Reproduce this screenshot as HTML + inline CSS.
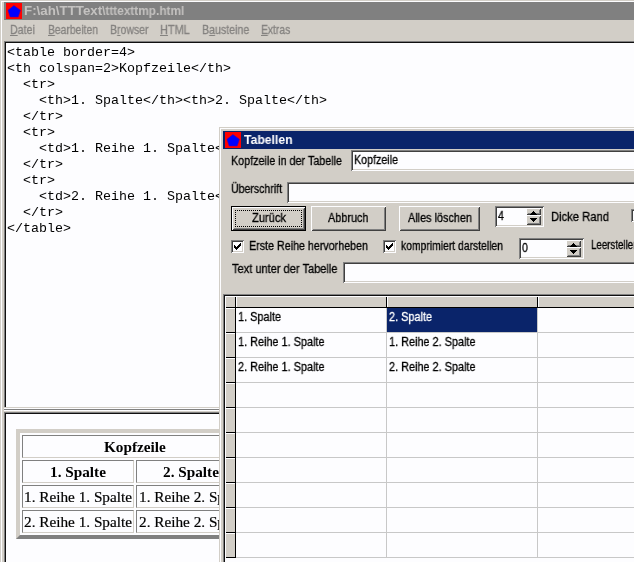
<!DOCTYPE html>
<html><head><meta charset="utf-8"><title>Tabellen</title>
<style>
html,body{margin:0;padding:0}
body{width:634px;height:562px;overflow:hidden;position:relative;background:#d2cec7;font-family:'Liberation Sans',sans-serif}
div,svg,.t{position:absolute}
.t{white-space:pre;transform-origin:0 0;will-change:transform}
u{text-decoration:underline;text-underline-offset:1px}
</style></head>
<body>
<div style="left:1px;top:1px;width:633px;height:1px;background:#fdfdff;"></div>
<div style="left:1px;top:1px;width:1px;height:561px;background:#fdfdff;"></div>
<div style="left:4px;top:2px;width:630px;height:18px;background:#808080;"></div>
<svg style="left:6px;top:3px" width="16" height="16" viewBox="0 0 16 16"><rect width="16" height="16" fill="#ff0000"/><polygon points="7.9,2.6 14.4,7.3 12.2,13.9 4.2,13.9 2,7.3" fill="#0000ff" stroke="#4000b0" stroke-width="0.6"/></svg>
<span class="t" style="left:24px;top:5.42px;font-size:12.5px;line-height:12.5px;color:#c4c2c0;font-weight:700;transform:scaleX(1.0655);">F:\ah\TTText</span>
<span class="t" style="left:102.2px;top:5.42px;font-size:12.5px;line-height:12.5px;color:#c4c2c0;font-weight:700;transform:scaleX(0.9480);">\tttexttmp.html</span>
<span class="t" style="left:10.2px;top:24.42px;font-size:12.5px;line-height:12.5px;color:#858380;-webkit-text-stroke:0.3px;transform:scaleX(0.8497);"><u>D</u>atei</span>
<span class="t" style="left:47.5px;top:24.42px;font-size:12.5px;line-height:12.5px;color:#858380;-webkit-text-stroke:0.3px;transform:scaleX(0.8269);"><u>B</u>earbeiten</span>
<span class="t" style="left:109.5px;top:24.42px;font-size:12.5px;line-height:12.5px;color:#858380;-webkit-text-stroke:0.3px;transform:scaleX(0.8398);">B<u>r</u>owser</span>
<span class="t" style="left:159.8px;top:24.42px;font-size:12.5px;line-height:12.5px;color:#858380;-webkit-text-stroke:0.3px;transform:scaleX(0.8727);"><u>H</u>TML</span>
<span class="t" style="left:201.8px;top:24.42px;font-size:12.5px;line-height:12.5px;color:#858380;-webkit-text-stroke:0.3px;transform:scaleX(0.8488);">B<u>a</u>usteine</span>
<span class="t" style="left:260.8px;top:24.42px;font-size:12.5px;line-height:12.5px;color:#858380;-webkit-text-stroke:0.3px;transform:scaleX(0.8240);"><u>E</u>xtras</span>
<div style="left:4px;top:41px;width:630px;height:366px;background:#808080;"></div>
<div style="left:5px;top:42px;width:629px;height:365px;background:#101010;"></div>
<div style="left:6px;top:43px;width:628px;height:364px;background:#fdfdff;"></div>
<span class="t" style="left:7px;top:45.89px;font-size:13.333px;line-height:13.333px;color:#000;font-family:'Liberation Mono',monospace;">&lt;table border=4&gt;</span>
<span class="t" style="left:7px;top:61.89px;font-size:13.333px;line-height:13.333px;color:#000;font-family:'Liberation Mono',monospace;">&lt;th colspan=2&gt;Kopfzeile&lt;/th&gt;</span>
<span class="t" style="left:7px;top:77.89px;font-size:13.333px;line-height:13.333px;color:#000;font-family:'Liberation Mono',monospace;">  &lt;tr&gt;</span>
<span class="t" style="left:7px;top:93.89px;font-size:13.333px;line-height:13.333px;color:#000;font-family:'Liberation Mono',monospace;">    &lt;th&gt;1. Spalte&lt;/th&gt;&lt;th&gt;2. Spalte&lt;/th&gt;</span>
<span class="t" style="left:7px;top:109.89px;font-size:13.333px;line-height:13.333px;color:#000;font-family:'Liberation Mono',monospace;">  &lt;/tr&gt;</span>
<span class="t" style="left:7px;top:125.89px;font-size:13.333px;line-height:13.333px;color:#000;font-family:'Liberation Mono',monospace;">  &lt;tr&gt;</span>
<span class="t" style="left:7px;top:141.89px;font-size:13.333px;line-height:13.333px;color:#000;font-family:'Liberation Mono',monospace;">    &lt;td&gt;1. Reihe 1. Spalte&lt;/td&gt;&lt;td&gt;1. Reihe 2. Spalte&lt;/td&gt;</span>
<span class="t" style="left:7px;top:157.89px;font-size:13.333px;line-height:13.333px;color:#000;font-family:'Liberation Mono',monospace;">  &lt;/tr&gt;</span>
<span class="t" style="left:7px;top:173.89px;font-size:13.333px;line-height:13.333px;color:#000;font-family:'Liberation Mono',monospace;">  &lt;tr&gt;</span>
<span class="t" style="left:7px;top:189.89px;font-size:13.333px;line-height:13.333px;color:#000;font-family:'Liberation Mono',monospace;">    &lt;td&gt;2. Reihe 1. Spalte&lt;/td&gt;&lt;td&gt;2. Reihe 2. Spalte&lt;/td&gt;</span>
<span class="t" style="left:7px;top:205.89px;font-size:13.333px;line-height:13.333px;color:#000;font-family:'Liberation Mono',monospace;">  &lt;/tr&gt;</span>
<span class="t" style="left:7px;top:221.89px;font-size:13.333px;line-height:13.333px;color:#000;font-family:'Liberation Mono',monospace;">&lt;/table&gt;</span>
<div style="left:4px;top:407px;width:630px;height:1px;background:#d2cec7;"></div>
<div style="left:4px;top:408px;width:630px;height:1px;background:#fdfdff;"></div>
<div style="left:4px;top:409px;width:630px;height:1px;background:#808080;"></div>
<div style="left:4px;top:410px;width:630px;height:1px;background:#fdfdff;"></div>
<div style="left:4px;top:411px;width:630px;height:1px;background:#d2cec7;"></div>
<div style="left:4px;top:412px;width:630px;height:150px;background:#808080;"></div>
<div style="left:5px;top:413px;width:629px;height:149px;background:#101010;"></div>
<div style="left:6px;top:414px;width:628px;height:148px;background:#fdfdff;"></div>
<div style="left:16px;top:429px;width:238px;height:110px;background:#fdfdff;box-sizing:border-box;border:4px solid;border-color:#d2cec7 #808080 #808080 #d2cec7"></div>
<div style="left:22px;top:435px;width:226px;height:23px;box-sizing:border-box;border:1px solid;border-color:#808080 #d2cec7 #d2cec7 #808080"></div>
<div style="left:22px;top:460px;width:112px;height:23px;box-sizing:border-box;border:1px solid;border-color:#808080 #d2cec7 #d2cec7 #808080"></div>
<div style="left:136px;top:460px;width:112px;height:23px;box-sizing:border-box;border:1px solid;border-color:#808080 #d2cec7 #d2cec7 #808080"></div>
<div style="left:22px;top:485px;width:112px;height:23px;box-sizing:border-box;border:1px solid;border-color:#808080 #d2cec7 #d2cec7 #808080"></div>
<div style="left:136px;top:485px;width:112px;height:23px;box-sizing:border-box;border:1px solid;border-color:#808080 #d2cec7 #d2cec7 #808080"></div>
<div style="left:22px;top:510px;width:112px;height:23px;box-sizing:border-box;border:1px solid;border-color:#808080 #d2cec7 #d2cec7 #808080"></div>
<div style="left:136px;top:510px;width:112px;height:23px;box-sizing:border-box;border:1px solid;border-color:#808080 #d2cec7 #d2cec7 #808080"></div>
<span class="t" style="left:104.0859375px;top:439.29px;font-size:15.25px;line-height:15.25px;color:#000;font-weight:700;font-family:'Liberation Serif',serif;">Kopfzeile</span>
<span class="t" style="left:50.0390625px;top:464.29px;font-size:15.25px;line-height:15.25px;color:#000;font-weight:700;font-family:'Liberation Serif',serif;">1. Spalte</span>
<span class="t" style="left:163.0390625px;top:464.29px;font-size:15.25px;line-height:15.25px;color:#000;font-weight:700;font-family:'Liberation Serif',serif;">2. Spalte</span>
<span class="t" style="left:24px;top:489.29px;font-size:15.25px;line-height:15.25px;color:#000;-webkit-text-stroke:0.2px;font-family:'Liberation Serif',serif;">1. Reihe 1. Spalte</span>
<span class="t" style="left:138.5px;top:489.29px;font-size:15.25px;line-height:15.25px;color:#000;-webkit-text-stroke:0.2px;font-family:'Liberation Serif',serif;">1. Reihe 2. Spalte</span>
<span class="t" style="left:24px;top:514.29px;font-size:15.25px;line-height:15.25px;color:#000;-webkit-text-stroke:0.2px;font-family:'Liberation Serif',serif;">2. Reihe 1. Spalte</span>
<span class="t" style="left:138.5px;top:514.29px;font-size:15.25px;line-height:15.25px;color:#000;-webkit-text-stroke:0.2px;font-family:'Liberation Serif',serif;">2. Reihe 2. Spalte</span>
<div style="left:219px;top:127px;width:415px;height:435px;background:#d2cec7;"></div>
<div style="left:220px;top:128px;width:414px;height:1px;background:#fdfdff;"></div>
<div style="left:220px;top:128px;width:1px;height:434px;background:#fdfdff;"></div>
<div style="left:223px;top:131px;width:411px;height:18px;background:#0a246a;"></div>
<svg style="left:225px;top:132px" width="16" height="16" viewBox="0 0 16 16"><rect width="16" height="16" fill="#ff0000"/><polygon points="7.9,2.6 14.4,7.3 12.2,13.9 4.2,13.9 2,7.3" fill="#0000ff" stroke="#4000b0" stroke-width="0.6"/></svg>
<span class="t" style="left:244px;top:134.42px;font-size:12.5px;line-height:12.5px;color:#fff;font-weight:700;transform:scaleX(0.9743);">Tabellen</span>
<span class="t" style="left:231.3px;top:155.42px;font-size:12.5px;line-height:12.5px;color:#000;-webkit-text-stroke:0.3px;transform:scaleX(0.8603);">Kopfzeile in der Tabelle</span>
<div style="left:351px;top:150px;width:290px;height:21px;background:#fdfdff;box-shadow:inset 1px 1px 0 #808080,inset -1px -1px 0 #fdfdff,inset 2px 2px 0 #404040,inset -2px -2px 0 #d2cec7"></div>
<span class="t" style="left:354.3px;top:154.42px;font-size:12.5px;line-height:12.5px;color:#000;-webkit-text-stroke:0.3px;transform:scaleX(0.8554);">Kopfzeile</span>
<span class="t" style="left:231.3px;top:183.42px;font-size:12.5px;line-height:12.5px;color:#000;-webkit-text-stroke:0.3px;transform:scaleX(0.8438);">Überschrift</span>
<div style="left:287px;top:182px;width:354px;height:21px;background:#fdfdff;box-shadow:inset 1px 1px 0 #808080,inset -1px -1px 0 #fdfdff,inset 2px 2px 0 #404040,inset -2px -2px 0 #d2cec7"></div>
<div style="left:231px;top:206px;width:75px;height:25px;background:#000;"></div>
<div style="left:232px;top:207px;width:73px;height:23px;background:#d2cec7;box-shadow:inset 1px 1px 0 #fdfdff,inset -1px -1px 0 #404040,inset 2px 2px 0 #d2cec7,inset -2px -2px 0 #808080"></div>
<div style="left:235px;top:210px;width:67px;height:17px;box-sizing:border-box;border:1px dotted #000"></div>
<span class="t" style="left:251.5px;top:212.42px;font-size:12.5px;line-height:12.5px;color:#000;-webkit-text-stroke:0.3px;transform:scaleX(0.8900);">Zurück</span>
<div style="left:311px;top:206px;width:75px;height:25px;background:#d2cec7;box-shadow:inset 1px 1px 0 #fdfdff,inset -1px -1px 0 #404040,inset 2px 2px 0 #d2cec7,inset -2px -2px 0 #808080"></div>
<span class="t" style="left:328.25px;top:212.42px;font-size:12.5px;line-height:12.5px;color:#000;-webkit-text-stroke:0.3px;transform:scaleX(0.8698);">Abbruch</span>
<div style="left:399px;top:206px;width:81px;height:25px;background:#d2cec7;box-shadow:inset 1px 1px 0 #fdfdff,inset -1px -1px 0 #404040,inset 2px 2px 0 #d2cec7,inset -2px -2px 0 #808080"></div>
<span class="t" style="left:407.5px;top:212.42px;font-size:12.5px;line-height:12.5px;color:#000;-webkit-text-stroke:0.3px;transform:scaleX(0.8689);">Alles löschen</span>
<div style="left:495px;top:206px;width:49px;height:21px;background:#fdfdff;box-shadow:inset 1px 1px 0 #808080,inset -1px -1px 0 #fdfdff,inset 2px 2px 0 #404040,inset -2px -2px 0 #d2cec7"></div>
<div style="left:526px;top:208px;width:16px;height:17px;background:#d2cec7;"></div>
<div style="left:526px;top:208px;width:15px;height:7px;background:#d2cec7;box-shadow:inset 1px 1px 0 #fdfdff,inset -1px -1px 0 #404040,inset 2px 2px 0 #d2cec7,inset -2px -2px 0 #808080"></div>
<div style="left:526px;top:215px;width:15px;height:10px;background:#d2cec7;box-shadow:inset 1px 1px 0 #fdfdff,inset -1px -1px 0 #404040,inset 2px 2px 0 #d2cec7,inset -2px -2px 0 #808080"></div>
<svg style="left:526px;top:208px" width="16" height="17" viewBox="0 0 16 17" fill="#000"><rect x="7" y="3" width="1" height="1"/><rect x="6" y="4" width="3" height="1"/><rect x="5" y="5" width="5" height="1"/><rect x="4" y="6" width="7" height="1"/><rect x="4" y="10" width="7" height="1"/><rect x="5" y="11" width="5" height="1"/><rect x="6" y="12" width="3" height="1"/><rect x="7" y="13" width="1" height="1"/></svg>
<span class="t" style="left:498.3px;top:210.42px;font-size:12.5px;line-height:12.5px;color:#000;-webkit-text-stroke:0.3px;transform:scaleX(0.8500);">4</span>
<span class="t" style="left:551px;top:211.42px;font-size:12.5px;line-height:12.5px;color:#000;-webkit-text-stroke:0.3px;transform:scaleX(0.8975);">Dicke Rand</span>
<div style="left:631px;top:209px;width:13px;height:13px;background:#fdfdff;box-shadow:inset 1px 1px 0 #808080,inset -1px -1px 0 #fdfdff,inset 2px 2px 0 #404040,inset -2px -2px 0 #d2cec7"></div>
<div style="left:231px;top:240px;width:13px;height:13px;background:#fdfdff;box-shadow:inset 1px 1px 0 #808080,inset -1px -1px 0 #fdfdff,inset 2px 2px 0 #404040,inset -2px -2px 0 #d2cec7"></div>
<svg style="left:231px;top:240px" width="13" height="13" viewBox="0 0 13 13"><path d="M3 5h1v1h1v1h1v-1h1v-1h1v-1h1v-1h1v3h-1v1h-1v1h-1v1h-1v1h-1v-1h-1v-1h-1z" fill="#000"/></svg>
<span class="t" style="left:248.7px;top:240.42px;font-size:12.5px;line-height:12.5px;color:#000;-webkit-text-stroke:0.3px;transform:scaleX(0.8562);">Erste Reihe hervorheben</span>
<div style="left:383px;top:240px;width:13px;height:13px;background:#fdfdff;box-shadow:inset 1px 1px 0 #808080,inset -1px -1px 0 #fdfdff,inset 2px 2px 0 #404040,inset -2px -2px 0 #d2cec7"></div>
<svg style="left:383px;top:240px" width="13" height="13" viewBox="0 0 13 13"><path d="M3 5h1v1h1v1h1v-1h1v-1h1v-1h1v-1h1v3h-1v1h-1v1h-1v1h-1v1h-1v-1h-1v-1h-1z" fill="#000"/></svg>
<span class="t" style="left:400.5px;top:240.42px;font-size:12.5px;line-height:12.5px;color:#000;-webkit-text-stroke:0.3px;transform:scaleX(0.8295);">komprimiert darstellen</span>
<div style="left:519px;top:238px;width:65px;height:21px;background:#fdfdff;box-shadow:inset 1px 1px 0 #808080,inset -1px -1px 0 #fdfdff,inset 2px 2px 0 #404040,inset -2px -2px 0 #d2cec7"></div>
<div style="left:566px;top:240px;width:16px;height:17px;background:#d2cec7;"></div>
<div style="left:566px;top:240px;width:15px;height:7px;background:#d2cec7;box-shadow:inset 1px 1px 0 #fdfdff,inset -1px -1px 0 #404040,inset 2px 2px 0 #d2cec7,inset -2px -2px 0 #808080"></div>
<div style="left:566px;top:247px;width:15px;height:10px;background:#d2cec7;box-shadow:inset 1px 1px 0 #fdfdff,inset -1px -1px 0 #404040,inset 2px 2px 0 #d2cec7,inset -2px -2px 0 #808080"></div>
<svg style="left:566px;top:240px" width="16" height="17" viewBox="0 0 16 17" fill="#000"><rect x="7" y="3" width="1" height="1"/><rect x="6" y="4" width="3" height="1"/><rect x="5" y="5" width="5" height="1"/><rect x="4" y="6" width="7" height="1"/><rect x="4" y="10" width="7" height="1"/><rect x="5" y="11" width="5" height="1"/><rect x="6" y="12" width="3" height="1"/><rect x="7" y="13" width="1" height="1"/></svg>
<span class="t" style="left:522.3px;top:242.42px;font-size:12.5px;line-height:12.5px;color:#000;-webkit-text-stroke:0.3px;transform:scaleX(0.8500);">0</span>
<span class="t" style="left:591.2px;top:239.42px;font-size:12.5px;line-height:12.5px;color:#000;-webkit-text-stroke:0.3px;transform:scaleX(0.7767);">Leerstellen</span>
<span class="t" style="left:231.5px;top:263.42px;font-size:12.5px;line-height:12.5px;color:#000;-webkit-text-stroke:0.3px;transform:scaleX(0.8843);">Text unter der Tabelle</span>
<div style="left:343px;top:262px;width:298px;height:21px;background:#fdfdff;box-shadow:inset 1px 1px 0 #808080,inset -1px -1px 0 #fdfdff,inset 2px 2px 0 #404040,inset -2px -2px 0 #d2cec7"></div>
<div style="left:223px;top:294px;width:420px;height:270px;background:#808080;"></div>
<div style="left:224px;top:295px;width:420px;height:270px;background:#101010;"></div>
<div style="left:225px;top:296px;width:420px;height:270px;background:#fdfdff;"></div>
<div style="left:225px;top:296px;width:409px;height:11px;background:#d2cec7;"></div>
<div style="left:225px;top:296px;width:10px;height:262px;background:#d2cec7;"></div>
<div style="left:387px;top:308px;width:150px;height:24px;background:#0a246a;"></div>
<div style="left:386px;top:308px;width:1px;height:250px;background:#c8c8c8;"></div>
<div style="left:386px;top:296px;width:1px;height:12px;background:#000;"></div>
<div style="left:387px;top:296px;width:1px;height:11px;background:#fdfdff;"></div>
<div style="left:537px;top:308px;width:1px;height:250px;background:#c8c8c8;"></div>
<div style="left:537px;top:296px;width:1px;height:12px;background:#000;"></div>
<div style="left:538px;top:296px;width:1px;height:11px;background:#fdfdff;"></div>
<div style="left:236px;top:332px;width:398px;height:1px;background:#c8c8c8;"></div>
<div style="left:225px;top:332px;width:11px;height:1px;background:#000;"></div>
<div style="left:225px;top:333px;width:10px;height:1px;background:#fdfdff;"></div>
<div style="left:236px;top:357px;width:398px;height:1px;background:#c8c8c8;"></div>
<div style="left:225px;top:357px;width:11px;height:1px;background:#000;"></div>
<div style="left:225px;top:358px;width:10px;height:1px;background:#fdfdff;"></div>
<div style="left:236px;top:382px;width:398px;height:1px;background:#c8c8c8;"></div>
<div style="left:225px;top:382px;width:11px;height:1px;background:#000;"></div>
<div style="left:225px;top:383px;width:10px;height:1px;background:#fdfdff;"></div>
<div style="left:236px;top:407px;width:398px;height:1px;background:#c8c8c8;"></div>
<div style="left:225px;top:407px;width:11px;height:1px;background:#000;"></div>
<div style="left:225px;top:408px;width:10px;height:1px;background:#fdfdff;"></div>
<div style="left:236px;top:432px;width:398px;height:1px;background:#c8c8c8;"></div>
<div style="left:225px;top:432px;width:11px;height:1px;background:#000;"></div>
<div style="left:225px;top:433px;width:10px;height:1px;background:#fdfdff;"></div>
<div style="left:236px;top:457px;width:398px;height:1px;background:#c8c8c8;"></div>
<div style="left:225px;top:457px;width:11px;height:1px;background:#000;"></div>
<div style="left:225px;top:458px;width:10px;height:1px;background:#fdfdff;"></div>
<div style="left:236px;top:482px;width:398px;height:1px;background:#c8c8c8;"></div>
<div style="left:225px;top:482px;width:11px;height:1px;background:#000;"></div>
<div style="left:225px;top:483px;width:10px;height:1px;background:#fdfdff;"></div>
<div style="left:236px;top:507px;width:398px;height:1px;background:#c8c8c8;"></div>
<div style="left:225px;top:507px;width:11px;height:1px;background:#000;"></div>
<div style="left:225px;top:508px;width:10px;height:1px;background:#fdfdff;"></div>
<div style="left:236px;top:532px;width:398px;height:1px;background:#c8c8c8;"></div>
<div style="left:225px;top:532px;width:11px;height:1px;background:#000;"></div>
<div style="left:225px;top:533px;width:10px;height:1px;background:#fdfdff;"></div>
<div style="left:236px;top:557px;width:398px;height:1px;background:#c8c8c8;"></div>
<div style="left:225px;top:557px;width:11px;height:1px;background:#000;"></div>
<div style="left:225px;top:558px;width:10px;height:1px;background:#fdfdff;"></div>
<div style="left:225px;top:307px;width:409px;height:1px;background:#000;"></div>
<div style="left:235px;top:296px;width:1px;height:262px;background:#000;"></div>
<div style="left:225px;top:296px;width:409px;height:1px;background:#fdfdff;"></div>
<div style="left:225px;top:296px;width:1px;height:11px;background:#fdfdff;"></div>
<div style="left:236px;top:296px;width:1px;height:11px;background:#fdfdff;"></div>
<div style="left:225px;top:308px;width:10px;height:1px;background:#fdfdff;"></div>
<div style="left:225px;top:296px;width:1px;height:262px;background:#fdfdff;"></div>
<span class="t" style="left:238.2px;top:311.42px;font-size:12.5px;line-height:12.5px;color:#000;-webkit-text-stroke:0.3px;transform:scaleX(0.8700);">1. Spalte</span>
<span class="t" style="left:389.2px;top:311.42px;font-size:12.5px;line-height:12.5px;color:#fff;-webkit-text-stroke:0.3px;transform:scaleX(0.8700);">2. Spalte</span>
<span class="t" style="left:238.2px;top:336.42px;font-size:12.5px;line-height:12.5px;color:#000;-webkit-text-stroke:0.3px;transform:scaleX(0.8700);">1. Reihe 1. Spalte</span>
<span class="t" style="left:389.2px;top:336.42px;font-size:12.5px;line-height:12.5px;color:#000;-webkit-text-stroke:0.3px;transform:scaleX(0.8700);">1. Reihe 2. Spalte</span>
<span class="t" style="left:238.2px;top:361.42px;font-size:12.5px;line-height:12.5px;color:#000;-webkit-text-stroke:0.3px;transform:scaleX(0.8700);">2. Reihe 1. Spalte</span>
<span class="t" style="left:389.2px;top:361.42px;font-size:12.5px;line-height:12.5px;color:#000;-webkit-text-stroke:0.3px;transform:scaleX(0.8700);">2. Reihe 2. Spalte</span>
</body></html>
